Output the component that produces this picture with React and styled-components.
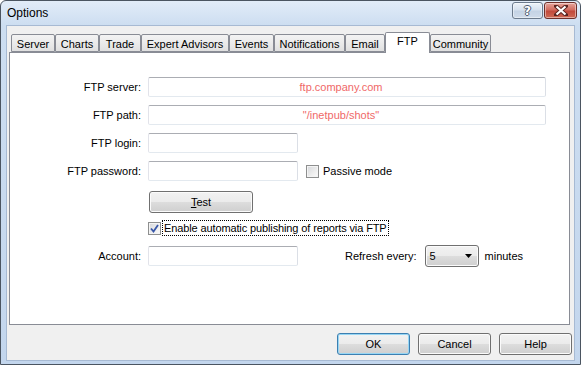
import React from "react";
import styled, { createGlobalStyle } from "styled-components";

const GlobalStyle = createGlobalStyle`
  html, body { margin: 0; padding: 0; background: #ffffff; }
  body { font-family: "Liberation Sans", Arial, sans-serif; font-size: 11px; color: #000; }
  * { box-sizing: border-box; }
`;

const Window = styled.div`
  width: 581px;
  height: 365px;
  border: 1px solid #4b5561;
  border-radius: 6px 6px 0 0;
  background: linear-gradient(180deg, #e2ecf8 0px, #cddef1 24px, #c3d6ed 100%);
  display: flex;
  flex-direction: column;
  padding: 0 6px 4px 6px;
`;

const TitleBar = styled.div`
  height: 25px;
  display: flex;
  align-items: flex-start;
`;

const Title = styled.div`
  font-size: 12px;
  line-height: 25px;
  color: #000;
`;

const CaptionGroup = styled.div`
  margin-left: auto;
  margin-top: 1px;
  margin-right: -3px;
  display: flex;
  gap: 1px;
`;

const CaptionButton = styled.div`
  width: ${(p) => p.$w}px;
  height: 17px;
  border: 1px solid ${(p) => (p.$close ? "#6e2f2a" : "#6b7a8c")};
  border-radius: 3px;
  background: ${(p) =>
    p.$close
      ? "linear-gradient(180deg, #e7a59c 0%, #d26c5f 45%, #c24a3c 55%, #cf6a55 100%)"
      : "linear-gradient(180deg, #eef3f9 0%, #d6e1ee 45%, #c4d3e5 55%, #cfdbea 100%)"};
  box-shadow: inset 0 0 0 1px rgba(255, 255, 255, 0.45);
  display: flex;
  align-items: center;
  justify-content: center;
`;

const HelpGlyph = styled.span`
  font-family: "DejaVu Sans", sans-serif;
  font-weight: bold;
  font-size: 12px;
  line-height: 12px;
  color: #ffffff;
  text-shadow: 1px 0 0 #4d5b6e, -1px 0 0 #4d5b6e, 0 1px 0 #4d5b6e, 0 -1px 0 #4d5b6e;
`;

const Client = styled.div`
  flex: 1;
  background: #f0f0f0;
  box-shadow: 0 0 0 1px #a7bad3;
  display: flex;
  flex-direction: column;
  padding: 6px 2px 0 2px;
`;

const TabRow = styled.div`
  display: flex;
  align-items: flex-end;
  height: 20px;
  padding-left: 2px;
  position: relative;
  z-index: 1;
`;

const Tab = styled.div`
  width: ${(p) => p.$w}px;
  height: ${(p) => (p.$active ? 21 : 18)}px;
  margin-bottom: ${(p) => (p.$active ? -1 : 0)}px;
  border: 1px solid #898c95;
  border-bottom: ${(p) => (p.$active ? "none" : "1px solid #898c95")};
  border-radius: 2px 2px 0 0;
  background: ${(p) =>
    p.$active ? "#ffffff" : "linear-gradient(180deg, #f3f3f3 0%, #ebebeb 50%, #e0e0e0 100%)"};
  text-align: center;
  line-height: 15px;
  padding-top: ${(p) => (p.$active ? 1 : 2)}px;
  white-space: nowrap;
`;

const Panel = styled.div`
  flex: 1;
  margin-right: 2px;
  border: 1px solid #898c95;
  background: #ffffff;
  padding-top: 24px;
`;

const Form = styled.div`
  display: grid;
  grid-template-columns: 131px 1fr;
  column-gap: 7px;
  row-gap: 8px;
  align-items: center;
`;

const Label = styled.div`
  text-align: right;
  white-space: nowrap;
`;

const Field = styled.div`
  display: flex;
  align-items: center;
  margin-top: ${(p) => p.$mt || 0}px;
`;

const TextBox = styled.div`
  width: ${(p) => p.$w}px;
  height: 20px;
  border: 1px solid;
  border-color: #abadb3 #dbdfe6 #e3e9ef #e2e3ea;
  border-radius: 2px;
  background: #ffffff;
  color: #f06868;
  line-height: 18px;
  text-align: center;
  padding-right: 12px;
  white-space: nowrap;
`;

const CheckBox = styled.span`
  width: 13px;
  height: 13px;
  flex: none;
  border: 1px solid #8e8f8f;
  background: linear-gradient(135deg, #d5d7db 0%, #eeeeee 60%, #fbfbfb 100%);
  box-shadow: inset 0 0 0 1px #f4f4f4;
  display: flex;
  align-items: center;
  justify-content: center;
`;

const CheckLabel = styled.span`
  margin-left: ${(p) => p.$ml}px;
  white-space: nowrap;
  line-height: 14px;
  padding: 0 1px;
  letter-spacing: ${(p) => (p.$focus ? "-0.12px" : "0")};
  border: 1px dotted ${(p) => (p.$focus ? "#000" : "transparent")};
`;

const Button = styled.div`
  width: ${(p) => p.$w}px;
  height: 22px;
  margin-left: ${(p) => p.$ml || 0}px;
  border: 1px solid ${(p) => (p.$default ? "#3c7fb1" : "#707070")};
  border-radius: 3px;
  background: linear-gradient(180deg, #f2f2f2 0%, #ebebeb 50%, #dddddd 50%, #cfcfcf 100%);
  box-shadow: inset 0 0 0 1px ${(p) => (p.$default ? "#97d6f4" : "#fbfbfb")};
  display: flex;
  align-items: center;
  justify-content: center;
  white-space: nowrap;
`;

const Mnemonic = styled.span`
  text-decoration: underline;
`;

const Spacer = styled.span`
  margin-left: ${(p) => p.$w}px;
  white-space: nowrap;
`;

const Select = styled.div`
  width: 54px;
  height: 22px;
  margin-left: 8px;
  border: 1px solid #707070;
  border-radius: 3px;
  background: linear-gradient(180deg, #f2f2f2 0%, #ebebeb 50%, #dddddd 50%, #cfcfcf 100%);
  box-shadow: inset 0 0 0 1px #fbfbfb;
  display: flex;
  align-items: center;
  padding: 0 6px 0 4px;
  justify-content: space-between;
`;

const Suffix = styled.span`
  margin-left: 6px;
`;

const Footer = styled.div`
  display: flex;
  justify-content: flex-end;
  gap: 8px;
  padding: 8px 0 5px 0;
`;

const tabs = [
  ["Server", 44],
  ["Charts", 44],
  ["Trade", 42],
  ["Expert Advisors", 88],
  ["Events", 45],
  ["Notifications", 71],
  ["Email", 40],
  ["FTP", 45],
  ["Community", 61],
];

function Check() {
  return (
    <svg width="9" height="9" viewBox="0 0 9 9">
      <path d="M1 4.5 L3.5 7.5 L8 1" fill="none" stroke="#3756a8" strokeWidth="1.8" />
    </svg>
  );
}

export default function App() {
  return (
    <>
      <GlobalStyle />
      <Window>
        <TitleBar>
          <Title>Options</Title>
          <CaptionGroup>
            <CaptionButton $w={31}>
              <HelpGlyph>?</HelpGlyph>
            </CaptionButton>
            <CaptionButton $w={33} $close>
              <svg width="14" height="11" viewBox="0 0 14 11">
                <path d="M2 1 L12 10 M12 1 L2 10" stroke="#5a2420" strokeWidth="4" strokeLinecap="square" />
                <path d="M2.5 1.5 L11.5 9.5 M11.5 1.5 L2.5 9.5" stroke="#ffffff" strokeWidth="2.2" />
              </svg>
            </CaptionButton>
          </CaptionGroup>
        </TitleBar>
        <Client>
          <TabRow>
            {tabs.map(([name, w]) => (
              <Tab key={name} $w={w} $active={name === "FTP"}>
                {name}
              </Tab>
            ))}
          </TabRow>
          <Panel>
            <Form>
              <Label>FTP server:</Label>
              <Field>
                <TextBox $w={398}>ftp.company.com</TextBox>
              </Field>
              <Label>FTP path:</Label>
              <Field>
                <TextBox $w={398}>"/inetpub/shots"</TextBox>
              </Field>
              <Label>FTP login:</Label>
              <Field>
                <TextBox $w={150} />
              </Field>
              <Label>FTP password:</Label>
              <Field>
                <TextBox $w={150} />
                <Spacer $w={8}>
                  <Field>
                    <CheckBox />
                    <CheckLabel $ml={2}>Passive mode</CheckLabel>
                  </Field>
                </Spacer>
              </Field>
              <Label />
              <Field $mt={2}>
                <Button $w={104} $ml={1}>
                  <span>
                    <Mnemonic>T</Mnemonic>est
                  </span>
                </Button>
              </Field>
              <Label />
              <Field $mt={-1}>
                <CheckBox>
                  <Check />
                </CheckBox>
                <CheckLabel $ml={1} $focus>
                  Enable automatic publishing of reports via FTP
                </CheckLabel>
              </Field>
              <Label>Account:</Label>
              <Field $mt={1}>
                <TextBox $w={150} />
                <Spacer $w={47}>Refresh every:</Spacer>
                <Select>
                  <span>5</span>
                  <svg width="7" height="4" viewBox="0 0 7 4">
                    <path d="M0 0 H7 L3.5 4 Z" fill="#000" />
                  </svg>
                </Select>
                <Suffix>minutes</Suffix>
              </Field>
            </Form>
          </Panel>
          <Footer>
            <Button $w={73} $default>OK</Button>
            <Button $w={73}>Cancel</Button>
            <Button $w={73}>Help</Button>
          </Footer>
        </Client>
      </Window>
    </>
  );
}
